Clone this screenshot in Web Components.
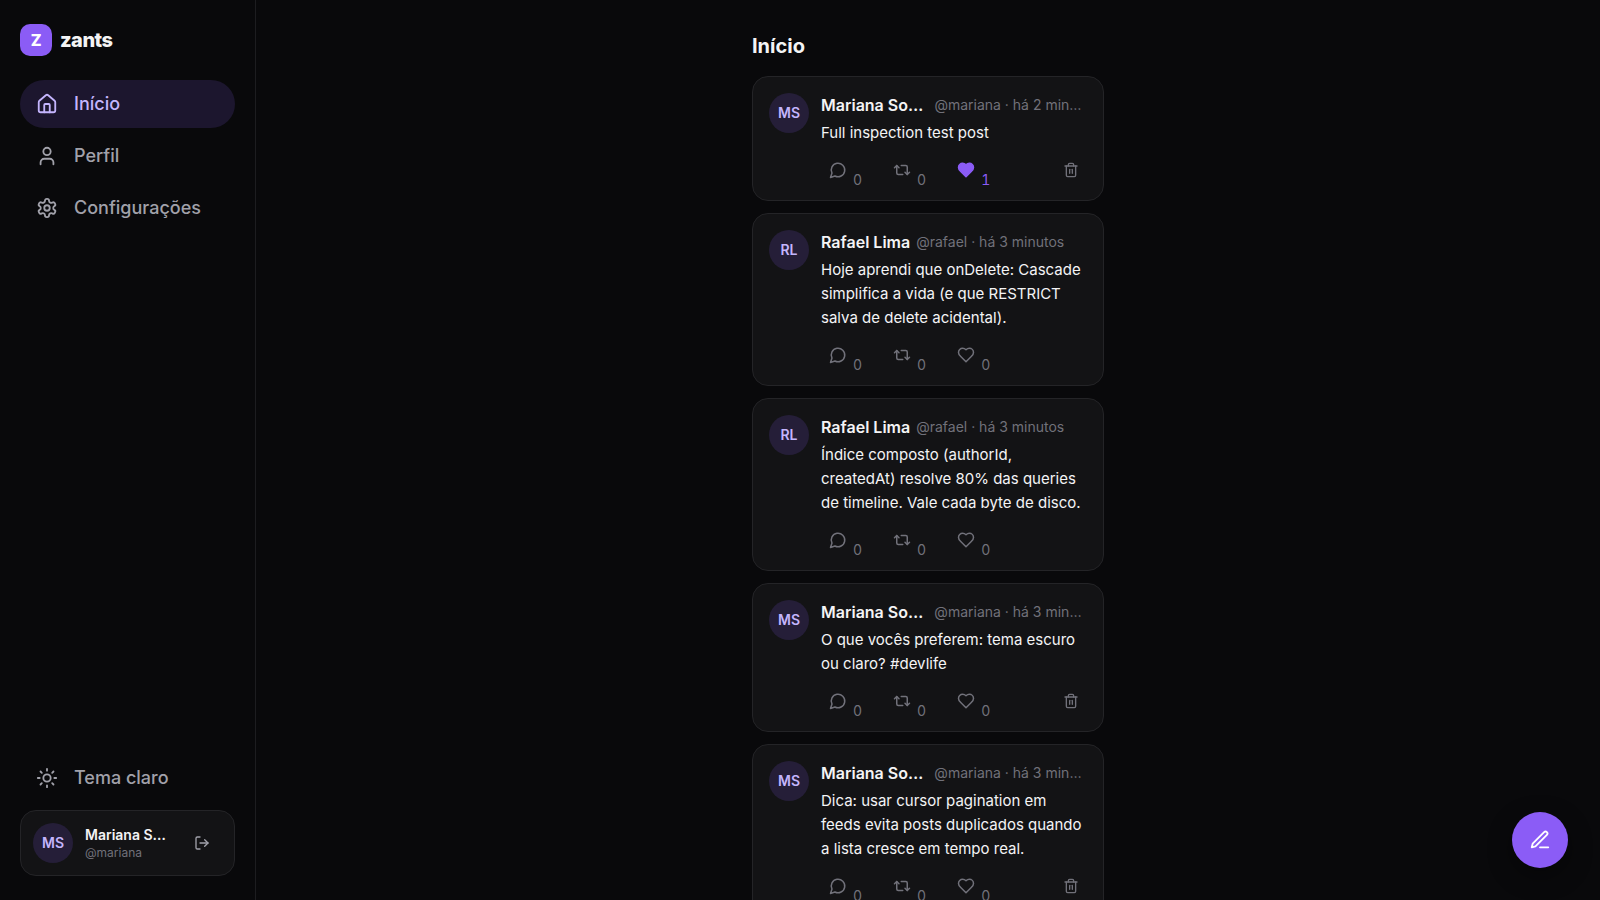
<!DOCTYPE html>
<html lang="pt-BR">
<head>
<meta charset="utf-8">
<meta name="viewport" content="width=device-width, initial-scale=1">
<title>zants</title>
<style>
    :root {
        --bg: #09090b;
        --surface: #131315;
        --border: #242427;
        --text: #f4f4f5;
        --muted: #a1a1aa;
        --subtle: #71717a;
        --primary: #8b5cf6;
        --primary-text: #c4b5fd;
        --primary-soft: #1c162e;
        --avatar: #251e38;
    }

    body {
        margin: 0;
        background: var(--bg);
        color: var(--text);
        font-family: Inter, "Liberation Sans", sans-serif;
        font-size: 16px;
    }
</style>
</head>
<body>
<z-app>
    <z-sidebar slot="sidebar">
        <z-nav-item icon="home" href="#inicio" active>Início</z-nav-item>
        <z-nav-item icon="user" href="#perfil">Perfil</z-nav-item>
        <z-nav-item icon="settings" href="#configuracoes">Configurações</z-nav-item>
        <z-nav-item slot="footer" icon="sun">Tema claro</z-nav-item>
        <z-user-card slot="footer" name="Mariana Souza" handle="@mariana" initials="MS"></z-user-card>
    </z-sidebar>

    <z-post name="Mariana Souza" handle="@mariana" initials="MS" time="há 2 minutos" likes="1" liked own>Full inspection test post</z-post>
    <z-post name="Rafael Lima" handle="@rafael" initials="RL" time="há 3 minutos" likes="0">Hoje aprendi que onDelete: Cascade simplifica a vida (e que RESTRICT salva de delete acidental).</z-post>
    <z-post name="Rafael Lima" handle="@rafael" initials="RL" time="há 3 minutos" likes="0">Índice composto (authorId, createdAt) resolve 80% das queries de timeline. Vale cada byte de disco.</z-post>
    <z-post name="Mariana Souza" handle="@mariana" initials="MS" time="há 3 minutos" likes="0" own>O que vocês preferem: tema escuro ou claro? #devlife</z-post>
    <z-post name="Mariana Souza" handle="@mariana" initials="MS" time="há 3 minutos" likes="0" own>Dica: usar cursor pagination em feeds evita posts duplicados quando a lista cresce em tempo real.</z-post>
</z-app>

<script>
const ICONS = {
    home: '<path d="M15 21v-8a1 1 0 0 0-1-1h-4a1 1 0 0 0-1 1v8"/><path d="M3 10a2 2 0 0 1 .709-1.528l7-5.999a2 2 0 0 1 2.582 0l7 5.999A2 2 0 0 1 21 10v9a2 2 0 0 1-2 2H5a2 2 0 0 1-2-2z"/>',
    user: '<path d="M19 21v-2a4 4 0 0 0-4-4H9a4 4 0 0 0-4 4v2"/><circle cx="12" cy="7" r="4"/>',
    settings: '<path d="M12.22 2h-.44a2 2 0 0 0-2 2v.18a2 2 0 0 1-1 1.73l-.43.25a2 2 0 0 1-2 0l-.15-.08a2 2 0 0 0-2.73.73l-.22.38a2 2 0 0 0 .73 2.73l.15.1a2 2 0 0 1 1 1.72v.51a2 2 0 0 1-1 1.74l-.15.09a2 2 0 0 0-.73 2.73l.22.38a2 2 0 0 0 2.73.73l.15-.08a2 2 0 0 1 2 0l.43.25a2 2 0 0 1 1 1.73V20a2 2 0 0 0 2 2h.44a2 2 0 0 0 2-2v-.18a2 2 0 0 1 1-1.73l.43-.25a2 2 0 0 1 2 0l.15.08a2 2 0 0 0 2.73-.73l.22-.39a2 2 0 0 0-.73-2.73l-.15-.08a2 2 0 0 1-1-1.74v-.5a2 2 0 0 1 1-1.74l.15-.09a2 2 0 0 0 .73-2.73l-.22-.38a2 2 0 0 0-2.73-.73l-.15.08a2 2 0 0 1-2 0l-.43-.25a2 2 0 0 1-1-1.73V4a2 2 0 0 0-2-2z"/><circle cx="12" cy="12" r="3"/>',
    sun: '<circle cx="12" cy="12" r="4"/><path d="M12 2v2M12 20v2M4.93 4.93l1.41 1.41M17.66 17.66l1.41 1.41M2 12h2M20 12h2M6.34 17.66l-1.41 1.41M19.07 4.93l-1.41 1.41"/>',
    logout: '<path d="M9 21H5a2 2 0 0 1-2-2V5a2 2 0 0 1 2-2h4"/><path d="m16 17 5-5-5-5"/><path d="M21 12H9"/>',
    comment: '<path d="M7.9 20A9 9 0 1 0 4 16.1L2 22Z"/>',
    repost: '<path d="m2 9 3-3 3 3"/><path d="M13 18H7a2 2 0 0 1-2-2V6"/><path d="m22 15-3 3-3-3"/><path d="M11 6h6a2 2 0 0 1 2 2v10"/>',
    heart: '<path d="M19 14c1.49-1.46 3-3.21 3-5.5A5.5 5.5 0 0 0 16.5 3c-1.76 0-3 .5-4.5 2-1.5-1.5-2.74-2-4.5-2A5.5 5.5 0 0 0 2 8.5c0 2.3 1.5 4.05 3 5.5l7 7Z"/>',
    trash: '<path d="M3 6h18"/><path d="M19 6v14a2 2 0 0 1-2 2H7a2 2 0 0 1-2-2V6"/><path d="M8 6V4a2 2 0 0 1 2-2h4a2 2 0 0 1 2 2v2"/><path d="M10 11v6"/><path d="M14 11v6"/>',
    pen: '<path d="M12 20h9"/><path d="M16.5 3.5a2.12 2.12 0 0 1 3 3L7 19l-4 1 1-4Z"/>'
};

function icon(name, size) {
    return `<svg width="${size}" height="${size}" viewBox="0 0 24 24" aria-hidden="true">${ICONS[name]}</svg>`;
}

// Base compartilhada por todos os elementos
const BASE = `
    * { box-sizing: border-box; }
    svg {
        display: block;
        flex: none;
        fill: none;
        stroke: currentColor;
        stroke-width: 2;
        stroke-linecap: round;
        stroke-linejoin: round;
    }
    button {
        margin: 0;
        padding: 0;
        border: 0;
        background: none;
        color: inherit;
        font: inherit;
        cursor: pointer;
    }
    .clip {
        min-width: 0;
        overflow: hidden;
        text-overflow: ellipsis;
        white-space: nowrap;
    }
`;

class ZAvatar extends HTMLElement {
    constructor() {
        super();
        this.attachShadow({ mode: 'open' }).innerHTML = `
            <style>
                :host {
                    display: flex;
                    flex: none;
                    align-items: center;
                    justify-content: center;
                    width: 40px;
                    height: 40px;
                    border-radius: 50%;
                    background: var(--avatar);
                    color: var(--primary-text);
                    font-size: 14px;
                    font-weight: 600;
                    line-height: 22px;
                }
            </style>
            <slot></slot>
        `;
    }
}

class ZNavItem extends HTMLElement {
    connectedCallback() {
        const href = this.getAttribute('href');
        const inner = `${icon(this.getAttribute('icon'), 22)}<slot></slot>`;
        this.attachShadow({ mode: 'open' }).innerHTML = `
            <style>
                ${BASE}
                :host { display: block; }
                .item {
                    display: flex;
                    align-items: center;
                    gap: 16px;
                    width: 100%;
                    height: 48px;
                    padding: 0 16px;
                    border-radius: 24px;
                    color: var(--muted);
                    font-size: 18px;
                    font-weight: 500;
                    line-height: 28px;
                    text-decoration: none;
                }
                :host([active]) .item {
                    background: var(--primary-soft);
                    color: var(--primary-text);
                }
            </style>
            ${href ? `<a class="item" href="${href}">${inner}</a>` : `<button class="item" type="button">${inner}</button>`}
        `;
    }
}

class ZUserCard extends HTMLElement {
    connectedCallback() {
        this.attachShadow({ mode: 'open' }).innerHTML = `
            <style>
                ${BASE}
                :host {
                    display: flex;
                    align-items: center;
                    gap: 12px;
                    padding: 12px;
                    border: 1px solid var(--border);
                    border-radius: 16px;
                    background: var(--surface);
                }
                .info { flex: 1; min-width: 0; }
                .name { font-size: 14px; font-weight: 600; line-height: 18px; }
                .handle { color: var(--subtle); font-size: 12px; line-height: 17px; }
                button { padding: 12px; color: var(--muted); }
            </style>
            <z-avatar>${this.getAttribute('initials')}</z-avatar>
            <div class="info">
                <div class="name clip">${this.getAttribute('name')}</div>
                <div class="handle clip">${this.getAttribute('handle')}</div>
            </div>
            <button type="button" aria-label="Sair">${icon('logout', 16)}</button>
        `;
    }
}

class ZSidebar extends HTMLElement {
    constructor() {
        super();
        this.attachShadow({ mode: 'open' }).innerHTML = `
            <style>
                ${BASE}
                :host {
                    box-sizing: border-box;
                    display: flex;
                    flex-direction: column;
                    gap: 24px;
                    height: 100vh;
                    padding: 24px 20px;
                    border-right: 1px solid #1d1d20;
                }
                .brand {
                    display: flex;
                    align-items: center;
                    gap: 8px;
                    color: inherit;
                    font-size: 20px;
                    font-weight: 800;
                    letter-spacing: -0.025em;
                    text-decoration: none;
                }
                .logo {
                    display: grid;
                    place-items: center;
                    width: 32px;
                    height: 32px;
                    border-radius: 10px;
                    background: var(--primary);
                    color: #fff;
                    font-size: 16px;
                }
                nav { display: grid; gap: 4px; }
                .footer {
                    display: grid;
                    grid-template-columns: minmax(0, 1fr);
                    gap: 8px;
                    margin-top: auto;
                }
            </style>
            <a class="brand" href="#"><span class="logo">Z</span><span>zants</span></a>
            <nav><slot></slot></nav>
            <div class="footer"><slot name="footer"></slot></div>
        `;
    }
}

class ZPost extends HTMLElement {
    connectedCallback() {
        const attr = (name) => this.getAttribute(name);
        this.attachShadow({ mode: 'open' }).innerHTML = `
            <style>
                ${BASE}
                :host { display: block; }
                article {
                    display: flex;
                    gap: 12px;
                    padding: 16px 16px 11px;
                    border: 1px solid var(--border);
                    border-radius: 16px;
                    background: var(--surface);
                }
                .body { flex: 1; min-width: 0; }
                header {
                    display: flex;
                    align-items: center;
                    gap: 6px;
                    line-height: 24px;
                }
                .name { font-weight: 600; }
                .meta { color: var(--subtle); font-size: 14px; }
                p {
                    margin: 4px 0 8px;
                    font-size: 15px;
                    line-height: 24px;
                }
                .actions {
                    display: flex;
                    align-items: flex-start;
                    gap: 15px;
                    color: var(--subtle);
                }
                .actions button {
                    display: flex;
                    align-items: flex-start;
                    gap: 6px;
                    padding: 8px 8px 0;
                }
                .count {
                    margin-top: 10px;
                    font-size: 14px;
                    font-variant-numeric: tabular-nums;
                    line-height: 18px;
                }
                .actions .delete { margin-left: auto; padding-top: 9px; }
                :host([liked]) .like { color: var(--primary); }
                :host([liked]) .like svg { fill: currentColor; }
            </style>
            <article>
                <z-avatar>${attr('initials')}</z-avatar>
                <div class="body">
                    <header>
                        <span class="name clip">${attr('name')}</span>
                        <span class="meta clip">${attr('handle')} · ${attr('time')}</span>
                    </header>
                    <p><slot></slot></p>
                    <div class="actions">
                        <button type="button" aria-label="Comentar">${icon('comment', 18)}<span class="count">0</span></button>
                        <button type="button" aria-label="Repostar">${icon('repost', 18)}<span class="count">0</span></button>
                        <button class="like" type="button" aria-label="Curtir">${icon('heart', 18)}<span class="count">${attr('likes')}</span></button>
                        ${this.hasAttribute('own') ? `<button class="delete" type="button" aria-label="Excluir">${icon('trash', 16)}</button>` : ''}
                    </div>
                </div>
            </article>
        `;
    }
}

class ZApp extends HTMLElement {
    constructor() {
        super();
        this.attachShadow({ mode: 'open' }).innerHTML = `
            <style>
                ${BASE}
                :host {
                    display: grid;
                    grid-template-columns: 256px minmax(0, 1fr);
                    height: 100vh;
                    overflow: hidden;
                }
                main {
                    height: 100vh;
                    overflow-y: auto;
                    scrollbar-width: none;
                }
                .feed {
                    display: grid;
                    grid-template-columns: minmax(0, 1fr);
                    gap: 12px;
                    max-width: 384px;
                    margin: 0 auto;
                    padding: 32px 16px;
                }
                h1 {
                    margin: 0 0 4px;
                    font-size: 20px;
                    font-weight: 700;
                    line-height: 28px;
                }
                .compose {
                    position: fixed;
                    right: 32px;
                    bottom: 32px;
                    display: grid;
                    place-items: center;
                    width: 56px;
                    height: 56px;
                    border-radius: 50%;
                    background: var(--primary);
                    color: #fff;
                    box-shadow: 0 8px 24px rgba(0, 0, 0, 0.4);
                }
            </style>
            <slot name="sidebar"></slot>
            <main>
                <div class="feed">
                    <h1>Início</h1>
                    <slot></slot>
                </div>
            </main>
            <button class="compose" type="button" aria-label="Novo post">${icon('pen', 22)}</button>
        `;
    }
}

customElements.define('z-avatar', ZAvatar);
customElements.define('z-nav-item', ZNavItem);
customElements.define('z-user-card', ZUserCard);
customElements.define('z-sidebar', ZSidebar);
customElements.define('z-post', ZPost);
customElements.define('z-app', ZApp);
</script>
</body>
</html>
